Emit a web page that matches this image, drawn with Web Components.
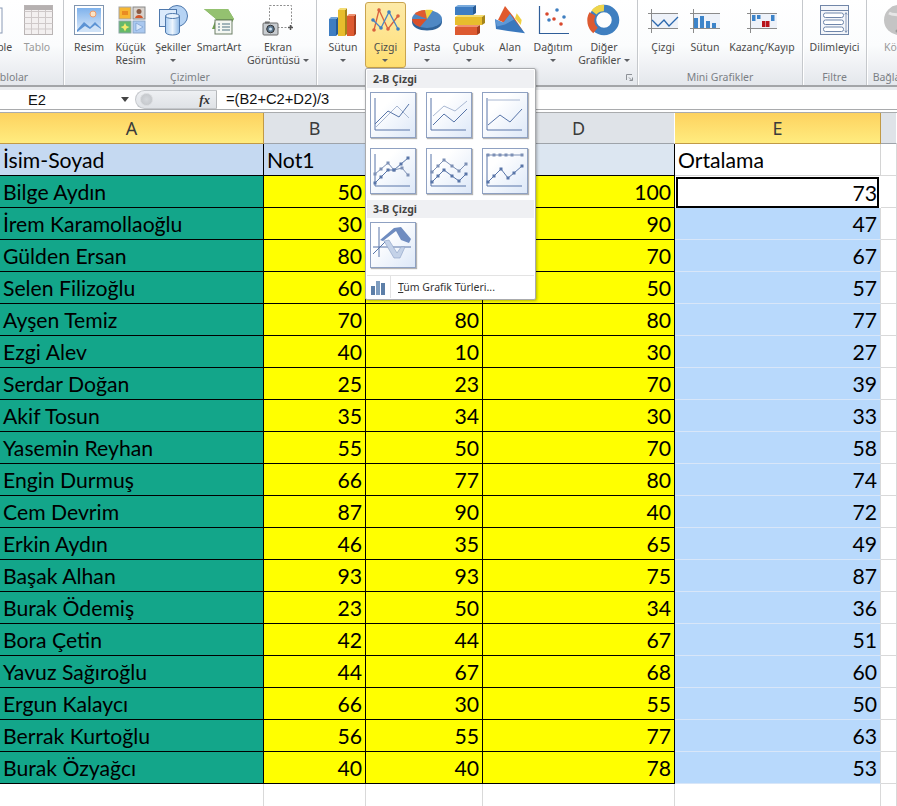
<!DOCTYPE html>
<html lang="tr">
<head>
<meta charset="utf-8">
<title>Excel</title>
<style>
  html, body { margin: 0; padding: 0; background: #fff; }
  body { width: 897px; height: 806px; overflow: hidden; position: relative; }
</style>
</head>
<body>
<excel-app>
  <excel-ribbon>
    <ribbon-group label="Tablolar" style="margin-left:-46px;width:110px" align="end">
      <ribbon-button icon="pivot" style="width:60px">PivotTable</ribbon-button>
      <ribbon-button icon="tablo" muted style="width:40px">Tablo</ribbon-button>
    </ribbon-group>
    <ribbon-group label="Çizimler" style="width:253px">
      <ribbon-button icon="resim" style="width:42px">Resim</ribbon-button>
      <ribbon-button icon="kucuk" style="width:41px">Küçük<br>Resim</ribbon-button>
      <ribbon-button icon="sekil" arrow="below" style="width:44px">Şekiller</ribbon-button>
      <ribbon-button icon="smart" style="width:48px">SmartArt</ribbon-button>
      <ribbon-button icon="ekran" arrow="inline" style="width:70px">Ekran<br>Görüntüsü</ribbon-button>
    </ribbon-group>
    <ribbon-group label="Grafikler" launcher style="width:321px">
      <ribbon-button icon="sutun" arrow="below" style="width:44px">Sütun</ribbon-button>
      <ribbon-button icon="cizgi" arrow="below" active style="width:41px">Çizgi</ribbon-button>
      <ribbon-button icon="pasta" arrow="below" style="width:42px">Pasta</ribbon-button>
      <ribbon-button icon="cubuk" arrow="below" style="width:41px">Çubuk</ribbon-button>
      <ribbon-button icon="alan" arrow="below" style="width:42px">Alan</ribbon-button>
      <ribbon-button icon="dagitim" arrow="below" style="width:44px">Dağıtım</ribbon-button>
      <ribbon-button icon="diger" arrow="inline" style="width:58px">Diğer<br>Grafikler</ribbon-button>
    </ribbon-group>
    <ribbon-group label="Mini Grafikler" style="width:165px">
      <ribbon-button icon="mcizgi" style="width:42px">Çizgi</ribbon-button>
      <ribbon-button icon="msutun" style="width:42px">Sütun</ribbon-button>
      <ribbon-button icon="mkazanc" style="width:72px">Kazanç/Kayıp</ribbon-button>
    </ribbon-group>
    <ribbon-group label="Filtre" style="width:64px">
      <ribbon-button icon="dilim" style="width:55px">Dilimleyici</ribbon-button>
    </ribbon-group>
    <ribbon-group label="Bağlantılar" style="width:66px">
      <ribbon-button icon="kopru" muted style="width:56px">Köprü</ribbon-button>
    </ribbon-group>
  </excel-ribbon>
  <formula-bar cell="E2">=(B2+C2+D2)/3</formula-bar>
  <excel-sheet></excel-sheet>
  <chart-menu></chart-menu>
</excel-app>

<script>
const ICONS = {
  pivot: `<rect x="24" y="4" width="7" height="25" fill="#fff" stroke="#8a9ab5"/>`,
  tablo: `<rect x="3.500" y="1.500" width="28" height="29" fill="#f3f0f0" stroke="#b9b4b4"/><path d="M3.500 7.500h28M3.500 13.500h28M3.500 19.500h28M3.500 25h28M10.500 2v28M17.500 2v28M24.500 2v28" stroke="#cfc9c9" fill="none"/><rect x="4" y="2" width="27" height="4" fill="#b5b0b0"/>`,
  resim: `<defs><linearGradient id="s" x1="0" y1="0" x2="0" y2="1"><stop offset="0" stop-color="#7fb2ec"/><stop offset="1" stop-color="#dceafa"/></linearGradient></defs>
    <rect x="1.500" y="1.500" width="29" height="29" fill="#fff" stroke="#8095b0"/><rect x="4" y="4" width="24" height="24" fill="url(#s)"/>
    <circle cx="20" cy="10" r="3" fill="#fbe3c4" stroke="#ee9a6a"/>
    <path d="M4 26l7-8 6 5 5-5 6 6v4H4z" fill="#5c93d4"/><path d="M4 28l8-6 5 3 5-4 6 4v3z" fill="#cfe2f7"/>`,
  kucuk: `<rect x="4" y="3" width="12" height="12" fill="#f7b733" stroke="#a5a5a5"/><rect x="7" y="7" width="6" height="4" fill="#e98b22"/>
    <rect x="18" y="3" width="12" height="12" fill="#d8d2cc" stroke="#888"/><circle cx="24" cy="7.500" r="2.500" fill="#8a5a44"/><path d="M20 14c1-4 7-4 8 0z" fill="#d1552a"/>
    <rect x="4" y="17" width="12" height="12" fill="#65b96a" stroke="#8aa5a5"/><path d="M10 19l1.500 3 3 1-3 1.500-1.500 3-1.500-3-3-1.500 3-1z" fill="#f3ea6b"/>
    <rect x="18" y="17" width="12" height="12" fill="#a9c8f0" stroke="#8aa5c5"/><path d="M21 19l7 4-7 4z" fill="#d9e8fb" stroke="#6d93c7" stroke-width=".6"/>`,
  sekil: `<defs><linearGradient id="c" x1="0" y1="0" x2="1" y2="0"><stop offset="0" stop-color="#a9cdf2"/><stop offset=".5" stop-color="#eef6fe"/><stop offset="1" stop-color="#8db8e6"/></linearGradient></defs>
    <circle cx="20" cy="12" r="10.500" fill="#b6d3f3" stroke="#4f79ad"/>
    <rect x="2.500" y="5.500" width="17" height="17" fill="#dbeafb" stroke="#4f79ad"/>
    <path d="M8.500 12v16c0 4 14 4 14 0V12z" fill="url(#c)" stroke="#4f79ad"/><ellipse cx="15.500" cy="12" rx="7" ry="2.500" fill="#e6f1fc" stroke="#4f79ad"/>`,
  smart: `<path d="M1 5h24l6 10-6 10H9l4-10z" fill="#6fa34c"/><path d="M1 5h24l6 10H13z" fill="#94c170"/>
    <rect x="12" y="16" width="17" height="14" fill="#f4f7f2" stroke="#6d7f66"/><path d="M15 20h2M19 20h8M15 23h2M19 23h8M15 26h2M19 26h8" stroke="#4f7282"/>`,
  ekran: `<rect x="7.500" y="1.500" width="22" height="22" fill="#fff" stroke="#8f8f8f" stroke-dasharray="2 1.500"/>
    <path d="M26 23.500h5M28.500 21v5" stroke="#555" stroke-width="1.500"/>
    <rect x="1" y="19" width="15" height="12" rx="1" fill="#c8ccd0" stroke="#6b6b6b"/><rect x="3" y="17.500" width="4" height="2" fill="#6b6b6b"/>
    <circle cx="8.500" cy="25" r="3.800" fill="#5d7890" stroke="#333"/><circle cx="8.500" cy="25" r="1.500" fill="#cfe3f2"/>`,
  sutun: `<path d="M2 15h7v17H2z" fill="#3e7dc2"/><path d="M9 15l2-2v17l-2 2z" fill="#275a94"/><path d="M2 15l2-2h7l-2 2z" fill="#6ea3da"/>
    <path d="M11 6h7v26h-7z" fill="#e7bd2d"/><path d="M18 6l2-2v26l-2 2z" fill="#a5851a"/><path d="M11 6l2-2h7l-2 2z" fill="#f4dc72"/>
    <path d="M20 12h7v20h-7z" fill="#dd5a31"/><path d="M27 12l2-2v20l-2 2z" fill="#a43c1d"/><path d="M20 12l2-2h7l-2 2z" fill="#ef9270"/>`,
  cizgi: `<path d="M4 26L9 6l9 19 10-13" fill="none" stroke="#d8613f" stroke-width="1.300"/><path d="M3 16l8 8 8-16 9 17" fill="none" stroke="#4a86c4" stroke-width="1.300"/>
    <g fill="#d8613f"><circle cx="4" cy="26" r="1.800"/><circle cx="9" cy="6" r="1.800"/><circle cx="18" cy="25" r="1.800"/><circle cx="28" cy="12" r="1.800"/></g>
    <g fill="#3f7fc0"><circle cx="3" cy="16" r="1.800"/><circle cx="11" cy="24" r="1.800"/><circle cx="19" cy="8" r="1.800"/><circle cx="28" cy="25" r="1.800"/></g>`,
  pasta: `<path d="M1 15v3c0 5 7 8.500 15 8.500S31 23 31 18v-3z" fill="#2f6299"/>
    <ellipse cx="16" cy="15" rx="15" ry="9" fill="#4f88c4"/>
    <path d="M16 15L1 15c0 3 3 6.500 8 8z" fill="#d9502a"/><path d="M16 15L3.500 10C6 7.500 10 6 14 6z" fill="#e05a2f"/><path d="M16 15l-2-9c3-.3 6-.2 8 .3z" fill="#f1d33e"/>`,
  cubuk: `<path d="M2 3h18v8H2z" fill="#3e7dc2"/><path d="M2 3l3-2h18l-3 2z" fill="#79abdd"/><path d="M20 3l3-2v8l-3 2z" fill="#275a94"/>
    <path d="M2 13h27v8H2z" fill="#e7bd2d"/><path d="M2 13l3-2h27l-3 2z" fill="#f4dc72"/><path d="M29 13l3-2v8l-3 2z" fill="#a5851a"/>
    <path d="M2 23h22v8H2z" fill="#dd5a31"/><path d="M2 23l3-2h22l-3 2z" fill="#ef9270"/><path d="M24 23l3-2v8l-3 2z" fill="#a43c1d"/>`,
  alan: `<path d="M4 16L11 2l8 10 10 15z" fill="#e0592e"/><path d="M22.700 9.300l5 6.700-1 5-5.700-6.700z" fill="#f0d040"/>
    <path d="M1 15.300l8.300 3.400L16 10l15 19.300L14 27 2 25z" fill="#3a78bd"/><path d="M1 15.300l8.300 3.400L16 10l4 5.500-9 5-8 2z" fill="#5f98d6"/>`,
  dagitim: `<path d="M2.500 2v27.500H32" fill="none" stroke="#2f5e99" stroke-width="1.200"/>
    <g fill="#3f7fc0"><circle cx="20" cy="6" r="1.800"/><circle cx="12" cy="16" r="1.800"/><circle cx="27" cy="13" r="1.800"/></g>
    <g fill="#d9482c"><circle cx="10" cy="10" r="1.800"/><circle cx="17" cy="15" r="1.800"/><circle cx="24" cy="20" r="1.800"/></g>`,
  diger: `<circle cx="16" cy="16" r="11.500" fill="none" stroke="#3f7fc0" stroke-width="7.500"/>
    <path d="M7.500 26.500A13 13 0 0 1 4.500 10" fill="none" stroke="#dd5a31" stroke-width="7"/>
    <path d="M6 8.500A12 12 0 0 1 16 4" fill="none" stroke="#efd54b" stroke-width="6.500"/>`,
  mcizgi: `<rect x="4" y="9" width="27" height="15" fill="#eef2f9"/><path d="M1 24.500h30M4.500 5v24M1 9.500h30" stroke="#8b8b8b" fill="none"/>
    <path d="M5 16l6 6 6-6 5 6 9-9" fill="none" stroke="#2b68ae" stroke-width="1.300"/>`,
  msutun: `<rect x="4" y="9" width="27" height="15" fill="#eef2f9"/><path d="M1 24.500h30M4.500 5v24M1 9.500h30" stroke="#8b8b8b" fill="none"/>
    <g fill="#3d84c9"><rect x="5" y="14" width="4" height="10"/><rect x="11" y="12" width="4" height="12"/><rect x="17" y="17" width="4" height="7"/><rect x="23" y="19" width="4" height="5"/></g>`,
  mkazanc: `<rect x="4" y="9" width="27" height="15" fill="#eef2f9"/><path d="M1 24.500h30M4.500 5v24M1 9.500h30" stroke="#8b8b8b" fill="none"/>
    <g fill="#3d84c9"><rect x="6" y="11" width="3.500" height="6"/><rect x="11" y="11" width="3.500" height="4"/><rect x="25" y="11" width="3.500" height="6"/></g>
    <g fill="#b8131b"><rect x="16" y="17" width="3.500" height="6"/><rect x="20" y="17" width="3.500" height="6"/></g>`,
  dilim: `<rect x="1.500" y="1.500" width="28" height="29" fill="#f4f6fa" stroke="#7186a8"/><path d="M1.500 6.500h28" stroke="#7186a8"/>
    <g fill="#fff" stroke="#6f86aa"><rect x="4.500" y="9" width="20" height="4.500" rx="2"/><rect x="4.500" y="16" width="20" height="4.500" rx="2"/><rect x="4.500" y="23" width="20" height="4.500" rx="2"/></g>
    <path d="M27 9v19M25.800 10.500L27 8.500l1.200 2M25.800 26.500l1.200 2 1.200-2" stroke="#6f86aa" fill="none" stroke-width=".8"/>`,
  kopru: `<circle cx="16" cy="16" r="15" fill="#c4c4c4"/><path d="M6 9c5 3 7 0 11 3s-3 8 1 11 7-5 10-4" fill="none" stroke="#e6e6e6" stroke-width="3"/>
    <path d="M14 27h10" stroke="#9a9a9a" stroke-width="3" stroke-linecap="round"/>`
};

// thumbnails are described by their polylines, coordinates measured from the outer corner of the box
const DARK = '#5875a8';
const MID = '#7d90b5';
const LIGHT = '#a9b8d2';

function poly(pts, color, marks) {
  let out = `<polyline points="${pts.map(p => p.join(',')).join(' ')}" fill="none" stroke="${color}" stroke-width="1"/>`;
  if (marks) out += pts.map(p => `<rect x="${p[0] - 1.5}" y="${p[1] - 1.5}" width="3" height="3" fill="${color}"/>`).join('');
  return out;
}

const TOP_LINE = [[6, 7], [12, 7], [18, 7], [24, 7], [30, 7], [40, 7]];
const THUMBS = {
  t1: poly([[5, 36], [27, 14], [39, 26]], LIGHT) + poly([[5, 32], [18, 19], [29, 25], [39, 12]], DARK),
  t2: poly([[7, 24], [18, 14], [29, 19], [41, 9]], LIGHT) + poly([[7, 33], [18, 22], [28, 30], [41, 17]], DARK),
  t3: poly([[6, 8], [38, 8]], LIGHT) + poly([[6, 33], [18, 23], [28, 30], [40, 17]], DARK),
  t4: poly([[5, 26], [11, 21], [18, 15], [24, 22], [32, 20], [38, 27]], MID, true) + poly([[5, 35], [11, 29], [18, 22], [24, 22], [31, 16], [38, 10]], DARK, true),
  t5: poly([[6, 24], [12, 18], [18, 12], [26, 18], [33, 23], [40, 16]], MID, true) + poly([[6, 34], [12, 28], [18, 22], [26, 28], [33, 33], [40, 26]], DARK, true),
  t6: poly(TOP_LINE, MID, true) + poly([[6, 34], [12, 28], [19, 21], [26, 30], [32, 25], [40, 18]], DARK, true),
  t7: `<path d="M9 5v30M3 25h38M3 32l13-13" fill="none" stroke="${DARK}"/>
    <path d="M10 18L24 6l7-1 10 12-2 4-8-3-5-9-13 10z" fill="#6f8cc0"/>
    <path d="M14 19l10 17h6l5-11h-4l-4 6-8-13z" fill="#c4d2e8" stroke="#8aa0c5" stroke-width=".6"/>`
};

class ExcelApp extends HTMLElement {
  constructor() {
    super();
    this.attachShadow({ mode: 'open' });
    this.shadowRoot.innerHTML = `
      <style>:host { display: block; width: 897px; height: 806px; overflow: hidden; position: relative; }</style>
      <slot></slot>`;
  }
}

class ExcelRibbon extends HTMLElement {
  constructor() {
    super();
    this.attachShadow({ mode: 'open' });
    this.shadowRoot.innerHTML = `
      <style>
        :host {
          display: flex; height: 85px; box-sizing: content-box;
          background: linear-gradient(#ffffff 0, #fbfcfd 45px, #e4e7ec 85px);
          border-bottom: 2px solid #a3a5a8;
          font: 10.5px "Noto Sans", sans-serif; color: #444;
        }
      </style>
      <slot></slot>`;
  }
}

class RibbonGroup extends HTMLElement {
  constructor() {
    super();
    this.attachShadow({ mode: 'open' });
    this.shadowRoot.innerHTML = `
      <style>
        :host {
          display: flex; flex-direction: column; flex: none; height: 85px; box-sizing: border-box;
          border-right: 1px solid #c5c8cc; box-shadow: 1px 0 0 #fff; position: relative;
        }
        .items { display: flex; flex: 1; padding: 2px 3px 0 4px; }
        :host([align="end"]) .items { justify-content: flex-end; padding-right: 6px; }
        .label { height: 15px; line-height: 15px; text-align: center; color: #7b7f85; white-space: nowrap; }
        .launcher { position: absolute; right: 4px; bottom: 4px; width: 7px; height: 7px; }
      </style>
      <div class="items"><slot></slot></div>
      <div class="label"></div>`;
    this.shadowRoot.querySelector('.label').textContent = this.getAttribute('label');
    if (this.hasAttribute('launcher')) {
      this.shadowRoot.innerHTML += `<svg class="launcher" viewBox="0 0 7 7"><path d="M.5 6V.5H6M3 3.500L6 6.500M3.500 6.500h3v-3" fill="none" stroke="#8d9197"/></svg>`;
    }
  }
}

class RibbonButton extends HTMLElement {
  constructor() {
    super();
    this.attachShadow({ mode: 'open' });
    this.shadowRoot.innerHTML = `
      <style>
        :host {
          display: flex; flex-direction: column; align-items: center; flex: none;
          height: 66px; box-sizing: border-box; padding-top: 1px; border: 1px solid transparent; border-radius: 3px;
          text-align: center; line-height: 13px; color: #4b4b4b; white-space: nowrap;
        }
        :host([active]) {
          background: linear-gradient(#fdeaa8, #fee38a 60%, #ffdf6f); border-color: #c9a44f;
        }
        :host([muted]) { color: #9a9a9a; }
        svg.icon { width: 32px; height: 32px; flex: none; overflow: visible; }
        .text { margin-top: 5px; }
        .arrow { display: inline-block; width: 0; height: 0; border: 3px solid transparent; border-top: 3px solid #5c5f63; border-bottom: 0; vertical-align: 2px; }
        .below { display: block; margin: 5px auto 0; }
        .inline { margin-left: 3px; }
      </style>
      <svg class="icon" viewBox="0 0 32 32"></svg>
      <div class="text"><slot></slot></div>`;
    this.shadowRoot.querySelector('svg').innerHTML = ICONS[this.getAttribute('icon')] || '';
    const arrow = this.getAttribute('arrow');
    if (arrow) {
      const el = document.createElement('span');
      el.className = 'arrow ' + arrow;
      this.shadowRoot.querySelector('.text').appendChild(el);
    }
  }
}

class FormulaBar extends HTMLElement {
  constructor() {
    super();
    this.attachShadow({ mode: 'open' });
    this.shadowRoot.innerHTML = `
      <style>
        :host {
          display: flex; height: 20px; box-sizing: border-box; margin-top: 3px; background: #fff;
          border-bottom: 1px solid #a9abad; font: 14.7px "Liberation Sans", sans-serif; color: #111;
          box-shadow: 0 -3px 0 #e9ebee;
        }
        .name { width: 135px; flex: none; display: flex; align-items: center; position: relative; padding-left: 28px; box-sizing: border-box; }
        .name i { position: absolute; left: 121px; top: 7px; border: 4px solid transparent; border-top: 5px solid #444; border-bottom: 0; }
        .btns {
          width: 82px; flex: none; box-sizing: border-box; display: flex; align-items: center; justify-content: space-between;
          background: linear-gradient(#eef0f3, #dfe2e6); border: 1px solid #c4c7cb; border-radius: 10px 0 0 10px; border-right-color: #b5b7ba; padding: 0 6px 0 4px;
        }
        .knob { width: 11px; height: 11px; border-radius: 50%; background: radial-gradient(#d5d8dc, #c0c3c7); border: 1px solid #d9dbde; }
        .fx { font: italic bold 13px "Liberation Serif", serif; color: #333; }
        .value { padding-left: 9px; line-height: 19px; }
      </style>
      <div class="name"><span></span><i></i></div>
      <div class="btns"><span class="knob"></span><span class="fx">fx</span></div>
      <div class="value"><slot></slot></div>`;
    this.shadowRoot.querySelector('.name span').textContent = this.getAttribute('cell');
  }
}

// the values of column C in the first rows lie under the open menu, so they stay empty
const SHEET_ROWS = [
  ['Bilge Aydın', 50, '', 100, 73],
  ['İrem Karamollaoğlu', 30, '', 90, 47],
  ['Gülden Ersan', 80, '', 70, 67],
  ['Selen Filizoğlu', 60, '', 50, 57],
  ['Ayşen Temiz', 70, 80, 80, 77],
  ['Ezgi Alev', 40, 10, 30, 27],
  ['Serdar Doğan', 25, 23, 70, 39],
  ['Akif Tosun', 35, 34, 30, 33],
  ['Yasemin Reyhan', 55, 50, 70, 58],
  ['Engin Durmuş', 66, 77, 80, 74],
  ['Cem Devrim', 87, 90, 40, 72],
  ['Erkin Aydın', 46, 35, 65, 49],
  ['Başak Alhan', 93, 93, 75, 87],
  ['Burak Ödemiş', 23, 50, 34, 36],
  ['Bora Çetin', 42, 44, 67, 51],
  ['Yavuz Sağıroğlu', 44, 67, 68, 60],
  ['Ergun Kalaycı', 66, 30, 55, 50],
  ['Berrak Kurtoğlu', 56, 55, 77, 63],
  ['Burak Özyağcı', 40, 40, 78, 53]
];

class ExcelSheet extends HTMLElement {
  constructor() {
    super();
    this.attachShadow({ mode: 'open' });
    const cell = (cls, text) => `<div class="c ${cls}">${text === undefined ? '' : text}</div>`;
    let html = '';
    ['A', 'B', '', 'D', 'E'].forEach(c => { html += cell('h' + (c === 'A' || c === 'E' ? ' on' : ''), c); });
    html += cell('h');
    html += cell('t b1', 'İsim-Soyad') + cell('t b1', 'Not1') + cell('t b1') + cell('t b2') + cell('t w', 'Ortalama') + cell('g');
    SHEET_ROWS.forEach((r, i) => {
      html += cell('t n', r[0]) + cell('r y', r[1]) + cell('r y', r[2]) + cell('r y', r[3]);
      html += cell('r ' + (i === 0 ? 'sel' : 'e'), r[4]) + cell('g');
    });
    for (let i = 0; i < 2; i++) html += cell('g') + cell('g') + cell('g') + cell('g') + cell('g') + cell('g');
    this.shadowRoot.innerHTML = `
      <style>
        :host { display: block; margin-top: 2px; border-top: 1px solid #a9abad; }
        .grid {
          display: grid; grid-template-columns: 264px 102px 117px 192px 206px 16px;
          grid-template-rows: 31px repeat(22, 32px); font: 21.2px Lato, sans-serif; color: #000;
        }
        .c { box-sizing: border-box; display: flex; align-items: center; padding: 0 3px; white-space: nowrap; border-right: 1px solid #000; border-bottom: 1px solid #000; min-width: 0; }
        .h { justify-content: center; background: #dfe3e8; border-right: 1px solid #fff; border-bottom: 1px solid #9ea3a9; color: #3b3b3b; font: 18px "Noto Sans", sans-serif; }
        .on { background: linear-gradient(#fdd25f, #ffec7f); border-right: 1px solid #c19a46; border-bottom: 1px solid #c19a46; }
        .b1 { background: #c5d9f1; }
        .b2 { background: #dce6f1; }
        .w { background: #fff; border-right-color: #d4d4d4; border-bottom-color: #d4d4d4; }
        .n { background: #13a68a; }
        .r { justify-content: flex-end; }
        .y { background: #ffff00; }
        .e { background: #b8d9fc; border-right-color: #d9d9d9; border-bottom-color: #d8e6f8; }
        .sel { background: #fff; border: 2px solid #000; margin: 1px 2px 0 1px; padding-right: 0; }
        .g { border-right-color: #d9d9d9; border-bottom-color: #d9d9d9; }
      </style>
      <div class="grid">${html}</div>`;
  }
}

class ChartThumb extends HTMLElement {
  constructor() {
    super();
    this.attachShadow({ mode: 'open' });
    const type = this.getAttribute('type');
    const axes = type === 't7' ? '' : `<path d="M5 6v32h35" fill="none" stroke="${DARK}"/>`;
    this.shadowRoot.innerHTML = `
      <style>
        :host {
          display: block; width: 46px; height: 46px; box-sizing: border-box; border: 1px solid #8fa1c2;
          background: linear-gradient(135deg, #ffffff 30%, #dde8f8); box-shadow: 1px 1px 1px #b4b4b4;
        }
        svg { display: block; width: 44px; height: 44px; }
      </style>
      <svg viewBox="1 1 44 44">${axes}${THUMBS[type]}</svg>`;
  }
}

class MenuHeading extends HTMLElement {
  constructor() {
    super();
    this.attachShadow({ mode: 'open' });
    this.shadowRoot.innerHTML = `
      <style>
        :host { display: block; height: 18px; line-height: 18px; padding-left: 6px; background: #eff0f3; color: #444; font-weight: bold; }
      </style>
      <slot></slot>`;
  }
}

class ChartMenu extends HTMLElement {
  constructor() {
    super();
    this.attachShadow({ mode: 'open' });
    this.shadowRoot.innerHTML = `
      <style>
        :host {
          position: absolute; left: 365px; top: 68px; width: 171px; height: 232px; box-sizing: border-box;
          display: flex; flex-direction: column; padding: 1px;
          background: #fff; border: 1px solid #a9abae; border-radius: 2px; box-shadow: 1px 1px 3px rgba(0,0,0,.3);
          font: 10.5px "Noto Sans", sans-serif; color: #444;
        }
        .thumbs { display: grid; grid-template-columns: repeat(3, 46px); gap: 10px; padding: 4px 3px 6px; }
        .thumbs.one { padding-bottom: 7px; flex: 1; }
        .foot { display: flex; align-items: stretch; height: 23px; border-top: 1px solid #e3e3e3; }
        .foot svg { width: 18px; height: 18px; margin: 2px 2px 0 3px; flex: none; }
        .foot span { padding-left: 7px; border-left: 1px solid #e3e3e3; line-height: 22px; color: #333; }
        u { text-decoration: underline; }
      </style>
      <menu-heading>2-B Çizgi</menu-heading>
      <div class="thumbs">
        <chart-thumb type="t1"></chart-thumb><chart-thumb type="t2"></chart-thumb><chart-thumb type="t3"></chart-thumb>
        <chart-thumb type="t4"></chart-thumb><chart-thumb type="t5"></chart-thumb><chart-thumb type="t6"></chart-thumb>
      </div>
      <menu-heading>3-B Çizgi</menu-heading>
      <div class="thumbs one"><chart-thumb type="t7"></chart-thumb></div>
      <div class="foot">
        <svg viewBox="0 0 18 18">
          <rect x="1" y="8" width="4" height="9" fill="#5d7fa8"/><rect x="6" y="3" width="4" height="14" fill="#7f9dc0"/><rect x="11" y="5" width="4" height="12" fill="#5d7fa8"/>
        </svg>
        <span><u>T</u>üm Grafik Türleri...</span>
      </div>`;
  }
}

customElements.define('excel-app', ExcelApp);
customElements.define('excel-ribbon', ExcelRibbon);
customElements.define('ribbon-group', RibbonGroup);
customElements.define('ribbon-button', RibbonButton);
customElements.define('formula-bar', FormulaBar);
customElements.define('excel-sheet', ExcelSheet);
customElements.define('chart-thumb', ChartThumb);
customElements.define('menu-heading', MenuHeading);
customElements.define('chart-menu', ChartMenu);
</script>
</body>
</html>
